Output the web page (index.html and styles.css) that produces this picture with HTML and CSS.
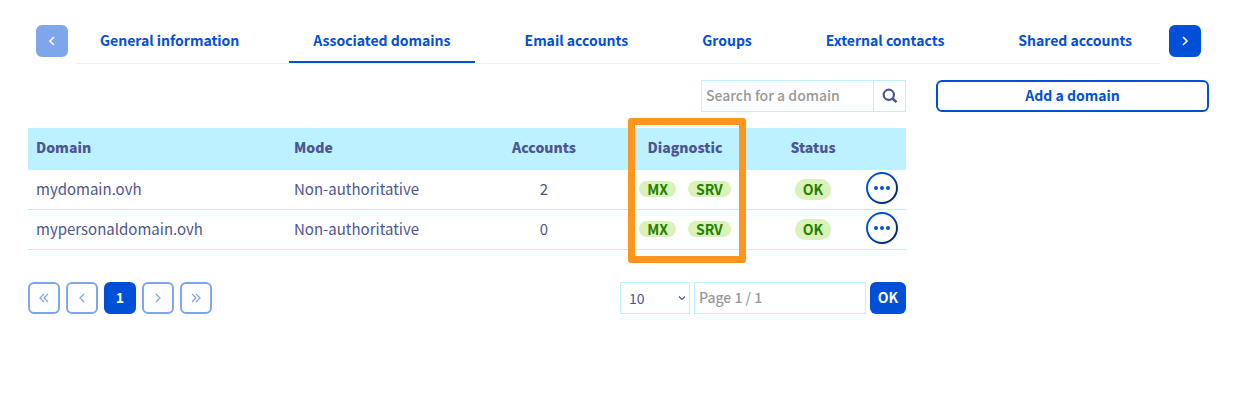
FILE: index.html
```html
<!DOCTYPE html>
<html lang="en">
<head>
<meta charset="utf-8">
<meta name="viewport" content="width=device-width, initial-scale=1">
<title>Associated domains</title>
<link rel="stylesheet" href="styles.css">
</head>
<body>
<svg class="defs" width="0" height="0" aria-hidden="true">
  <defs>
    <linearGradient id="ring" x1="0" y1="0" x2="1" y2="1">
      <stop offset="0.3" stop-color="#0050d7"/>
      <stop offset="1" stop-color="#001a5c"/>
    </linearGradient>
    <symbol id="dots" viewBox="0 0 32 32">
      <circle cx="16" cy="16" r="15" fill="#fff" stroke="url(#ring)" stroke-width="2"/>
      <circle cx="10" cy="16" r="2" fill="#0050d7"/>
      <circle cx="16" cy="16" r="2" fill="#0050d7"/>
      <circle cx="22" cy="16" r="2" fill="#0050d7"/>
    </symbol>
  </defs>
</svg>
<main class="page">
  <nav class="tabs" aria-label="Sections">
    <button class="square square-solid" type="button" aria-label="Previous tabs" disabled>
      <svg class="icon" viewBox="0 0 16 16"><path d="M10 4 6 8l4 4" stroke-width="1.6"/></svg>
    </button>
    <div class="tab-list">
      <a class="tab" href="#general">General information</a>
      <a class="tab tab-active" href="#domains" aria-current="page">Associated domains</a>
      <a class="tab" href="#emails">Email accounts</a>
      <a class="tab" href="#groups">Groups</a>
      <a class="tab" href="#contacts">External contacts</a>
      <a class="tab" href="#shared">Shared accounts</a>
    </div>
    <button class="square square-solid" type="button" aria-label="Next tabs">
      <svg class="icon" viewBox="0 0 16 16"><path d="m6 4 4 4-4 4" stroke-width="1.6"/></svg>
    </button>
  </nav>

  <div class="layout">
    <section class="content">
      <form class="search">
        <input class="field search-field" type="text" placeholder="Search for a domain" aria-label="Search for a domain">
        <button class="search-button" type="button" aria-label="Search">
          <svg class="icon" viewBox="0 0 16 16"><circle cx="6.8" cy="6.8" r="5.1" stroke-width="2.2"/><path d="m10.7 10.7 3.8 3.4" stroke-width="2.6"/></svg>
        </button>
      </form>

      <table class="table">
        <colgroup>
          <col class="col-domain"><col class="col-mode"><col class="col-accounts"><col class="col-diagnostic"><col class="col-status"><col class="col-actions">
        </colgroup>
        <thead>
          <tr>
            <th scope="col">Domain</th>
            <th scope="col">Mode</th>
            <th class="center" scope="col">Accounts</th>
            <th class="center marked" scope="col">Diagnostic<span class="highlight"></span></th>
            <th class="center" scope="col">Status</th>
            <td></td>
          </tr>
        </thead>
        <tbody>
          <tr>
            <td>mydomain.ovh</td>
            <td>Non-authoritative</td>
            <td class="center">2</td>
            <td><div class="badges"><span class="badge badge-small">MX</span><span class="badge badge-small">SRV</span></div></td>
            <td><div class="badges"><span class="badge">OK</span></div></td>
            <td class="actions"><button class="menu" type="button" aria-label="Actions for mydomain.ovh"><svg class="menu-icon"><use href="#dots"/></svg></button></td>
          </tr>
          <tr>
            <td>mypersonaldomain.ovh</td>
            <td>Non-authoritative</td>
            <td class="center">0</td>
            <td><div class="badges"><span class="badge badge-small">MX</span><span class="badge badge-small">SRV</span></div></td>
            <td><div class="badges"><span class="badge">OK</span></div></td>
            <td class="actions"><button class="menu" type="button" aria-label="Actions for mypersonaldomain.ovh"><svg class="menu-icon"><use href="#dots"/></svg></button></td>
          </tr>
        </tbody>
      </table>

      <div class="footer">
        <div class="pager">
          <button class="square" type="button" aria-label="First page" disabled><svg class="icon" viewBox="0 0 16 16"><path d="M8 4 4 8l4 4M12 4 8 8l4 4" stroke-width="1.2"/></svg></button>
          <button class="square" type="button" aria-label="Previous page" disabled><svg class="icon" viewBox="0 0 16 16"><path d="M10 4 6 8l4 4" stroke-width="1.2"/></svg></button>
          <button class="square square-solid current" type="button" aria-current="page">1</button>
          <button class="square" type="button" aria-label="Next page" disabled><svg class="icon" viewBox="0 0 16 16"><path d="m6 4 4 4-4 4" stroke-width="1.2"/></svg></button>
          <button class="square" type="button" aria-label="Last page" disabled><svg class="icon" viewBox="0 0 16 16"><path d="m4 4 4 4-4 4M8 4l4 4-4 4" stroke-width="1.2"/></svg></button>
        </div>
        <form class="page-form">
          <div class="select-box">
            <select class="select" aria-label="Rows per page"><option>10</option><option>25</option><option>50</option></select>
            <svg class="chevron" viewBox="0 0 8 8"><path d="m1 2.5 3 3 3-3"/></svg>
          </div>
          <input class="field page-field" type="text" placeholder="Page 1 / 1" aria-label="Page number">
          <button class="ok" type="button">OK</button>
        </form>
      </div>
    </section>

    <aside class="side">
      <button class="add" type="button">Add a domain</button>
    </aside>
  </div>
</main>
</body>
</html>
```

FILE: styles.css
```css
:root {
  --blue: #0050d7;
  --text: #4d5592;
  --line: #bef1ff;
}

* {
  box-sizing: border-box;
}

body {
  margin: 0;
  background: #fff;
  color: var(--text);
  font-family: "Noto Sans CJK SC", "Open Sans", sans-serif;
  font-size: 14px;
  line-height: 20px;
}

button,
input,
select {
  margin: 0;
  font: inherit;
  color: inherit;
}

.defs {
  position: absolute;
}

.page {
  padding: 25px 36px 24px 28px;
}

.icon {
  display: block;
  width: 16px;
  height: 16px;
  fill: none;
  stroke: currentColor;
}

.tabs {
  display: flex;
  align-items: flex-start;
  gap: 8px;
  padding: 0 8px;
}

.tab-list {
  display: flex;
  flex: 1;
  gap: 26px;
  border-bottom: 1px solid #e6f3fd;
}

.tab {
  padding: 5px 24px 11px;
  border-bottom: 2px solid transparent;
  color: var(--blue);
  font-weight: 700;
  text-decoration: none;
  white-space: nowrap;
}

.tab-active {
  border-bottom-color: var(--blue);
}

.square {
  display: flex;
  flex: none;
  align-items: center;
  justify-content: center;
  width: 32px;
  height: 32px;
  padding: 0;
  border: 2px solid var(--blue);
  border-radius: 6px;
  background: #fff;
  color: var(--blue);
  font-weight: 700;
}

.square-solid {
  background: var(--blue);
  color: #fff;
}

.current {
  padding-bottom: 2px;
}

.square:disabled {
  opacity: 0.5;
}

.layout {
  display: grid;
  grid-template-columns: minmax(0, 1fr) 273px;
  gap: 30px;
  margin-top: 16px;
}

.search {
  display: flex;
  justify-content: flex-end;
  margin-bottom: 16px;
}

.field {
  height: 32px;
  padding: 0 4px 2px;
  border: 1px solid var(--line);
  border-radius: 0;
  background: #fff;
  font-weight: 500;
}

.field::placeholder {
  color: #999;
  opacity: 1;
}

.search-field {
  width: 172px;
  border-right: 0;
}

.search-button {
  display: flex;
  align-items: center;
  justify-content: center;
  width: 33px;
  height: 32px;
  padding: 0;
  border: 1px solid var(--line);
  background: #fff;
}

.table {
  width: 100%;
  border-collapse: separate;
  border-spacing: 0;
  table-layout: fixed;
}

.col-domain { width: 258px; }
.col-mode { width: 200px; }
.col-accounts { width: 116px; }
.col-diagnostic { width: 166px; }
.col-status { width: 90px; }
.col-actions { width: 48px; }

.table th,
.table td {
  height: 40px;
  padding: 0 8px 1px;
  border-bottom: 1px solid var(--line);
  font-size: 15px;
  text-align: left;
  vertical-align: middle;
}

.table thead th,
.table thead td {
  height: 42px;
  padding-bottom: 4px;
  border-bottom: 0;
  background: #bef1ff;
  font-size: 14px;
  font-weight: 900;
}

.table .center {
  text-align: center;
}

.table .marked {
  position: relative;
}

.highlight {
  position: absolute;
  z-index: 1;
  top: -10px;
  left: 26px;
  right: 22px;
  height: 145px;
  border: 7px solid #ff951a;
  border-radius: 3px;
  pointer-events: none;
}

.badges {
  display: flex;
  align-items: center;
  justify-content: center;
  gap: 12px;
}

.badge {
  padding: 0 8px;
  border-radius: 11px;
  background: #daf2b9;
  color: #1f8000;
  font-size: 14px;
  font-weight: 700;
  line-height: 21px;
}

.badge-small {
  line-height: 16px;
}

.table .actions {
  padding-bottom: 3px;
}

.menu {
  display: block;
  width: 32px;
  height: 32px;
  padding: 0;
  border: 0;
  border-radius: 50%;
  background: none;
}

.menu-icon {
  display: block;
  width: 32px;
  height: 32px;
}

.footer {
  display: flex;
  justify-content: space-between;
  margin-top: 32px;
}

.pager {
  display: flex;
  gap: 6px;
}

.page-form {
  display: flex;
  gap: 4px;
}

.select-box {
  display: grid;
  align-items: center;
}

.select {
  grid-area: 1 / 1;
  width: 70px;
  height: 32px;
  padding: 0 8px;
  border: 1px solid var(--line);
  border-radius: 0;
  background: #fff;
  appearance: none;
}

.chevron {
  grid-area: 1 / 1;
  justify-self: end;
  width: 8px;
  height: 8px;
  margin-right: 4px;
  fill: none;
  stroke: var(--text);
  stroke-width: 1.2;
  pointer-events: none;
}

.page-field {
  width: 172px;
}

.ok {
  width: 36px;
  height: 32px;
  padding: 0 0 2px;
  border: 0;
  border-radius: 6px;
  background: var(--blue);
  color: #fff;
  font-weight: 700;
}

.add {
  display: block;
  width: 100%;
  height: 32px;
  padding: 0 0 2px;
  border: 2px solid var(--blue);
  border-radius: 6px;
  background: #fff;
  color: var(--blue);
  font-weight: 700;
}
```
